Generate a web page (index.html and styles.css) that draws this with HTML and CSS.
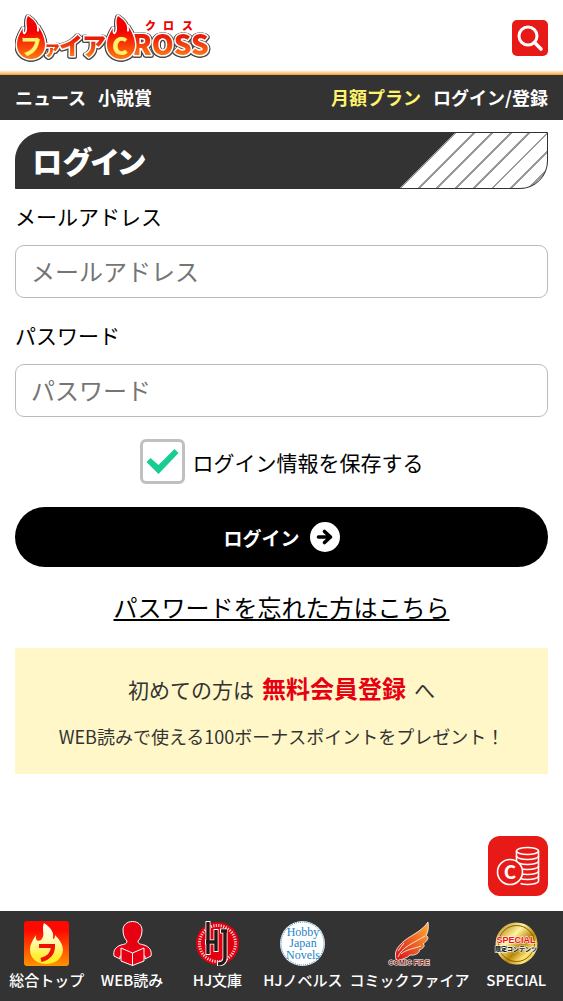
FILE: index.html
```
<!DOCTYPE html>
<html lang="ja">

<head>
    <meta charset="UTF-8">
    <meta name="viewport" content="width=device-width, initial-scale=1.0">
    <title>ログイン | ファイアCROSS</title>
    <link rel="stylesheet" href="styles.css">
</head>

<body>
    <header class="header">
        <a href="#" class="logo">
            <svg width="200" height="51" viewBox="0 0 200 51" role="img" aria-label="ファイアCROSS">
                <defs>
                    <linearGradient id="fire" x1="0" y1="0" x2="0" y2="1">
                        <stop offset="0.35" stop-color="#f40000"/>
                        <stop offset="1" stop-color="#ff7a10"/>
                    </linearGradient>
                    <linearGradient id="letter" x1="0" y1="0" x2="0" y2="1">
                        <stop offset="0.35" stop-color="#e81c08"/>
                        <stop offset="0.8" stop-color="#ff7414"/>
                    </linearGradient>
                    <path id="flame" d="M13 4C19 8 23 12 22 18C22 20 23 20 24 19C24 17 24 16 23 14C27 20 30 26 30 33C30 41 24 47 16 47C8 47 2 41 2 33C2 26 5 21 8 16C7 20 8 23 10 22C15 18 9 11 13 4Z"/>
                </defs>
                <g class="logo-body">
                    <g class="logo-letters">
                        <text x="28" y="43" font-size="18">ァ</text>
                        <text x="44" y="43" font-size="24">イ</text>
                        <text x="67" y="43" font-size="24">ア</text>
                        <text x="117" y="43" font-size="28">ROSS</text>
                    </g>
                    <use href="#flame"/>
                    <use href="#flame" x="90"/>
                </g>
                <text class="logo-mark" x="5" y="42" font-size="22">フ</text>
                <text class="logo-mark" x="97" y="43" font-size="24">C</text>
                <g class="logo-ruby">
                    <text x="130" y="18">ク</text>
                    <text x="148" y="18">ロ</text>
                    <text x="167" y="18">ス</text>
                </g>
            </svg>
        </a>
        <button type="button" class="search" aria-label="検索">
            <svg width="36" height="36" viewBox="0 0 36 36" fill="none" stroke="#fff">
                <circle cx="16" cy="16" r="9" stroke-width="3"/>
                <path d="M22.5 22.5L29 29" stroke-width="3.6" stroke-linecap="round"/>
            </svg>
        </button>
    </header>

    <nav class="nav">
        <a href="#">ニュース</a>
        <a href="#">小説賞</a>
        <a href="#" class="plan">月額プラン</a>
        <a href="#">ログイン/登録</a>
    </nav>

    <main class="main">
        <h1 class="title">ログイン</h1>
        <form class="form">
            <label for="mail" class="label">メールアドレス</label>
            <input type="email" id="mail" class="text" placeholder="メールアドレス">
            <label for="pass" class="label">パスワード</label>
            <input type="password" id="pass" class="text" placeholder="パスワード">
            <label class="save"><input type="checkbox" class="check" checked>ログイン情報を保存する</label>
            <button type="submit" class="submit">ログイン
                <svg width="30" height="30" viewBox="0 0 30 30">
                    <circle cx="15" cy="15" r="15" fill="#fff"/>
                    <path d="M8.5 15H20M14.5 9.5L20.5 15L14.5 20.5" fill="none" stroke="#000" stroke-width="3.6" stroke-linecap="round" stroke-linejoin="round"/>
                </svg>
            </button>
        </form>
        <a href="#" class="forgot">パスワードを忘れた方はこちら</a>
        <div class="entry">
            <p class="entry-lead">初めての方は<a href="#">無料会員登録</a>へ</p>
            <p class="entry-note">WEB読みで使える100ボーナスポイントをプレゼント！</p>
        </div>
    </main>

    <a href="#" class="coin" aria-label="コイン">
        <svg width="60" height="60" viewBox="0 0 60 60" fill="none" stroke="#fff" stroke-width="1.6">
            <ellipse cx="39.5" cy="15" rx="11" ry="3.5"/>
            <path d="M28.5 15V46M50.5 15V45c0 2-5 3.5-11 3.5-3 0-5-.3-7-1"/>
            <path d="M28.5 20c0 2 5 3.5 11 3.5s11-1.5 11-3.5M28.5 25c0 2 5 3.5 11 3.5s11-1.5 11-3.5M28.5 30c0 2 5 3.5 11 3.5s11-1.5 11-3.5M28.5 35c0 2 5 3.5 11 3.5s11-1.5 11-3.5M28.5 40c0 2 5 3.5 11 3.5s11-1.5 11-3.5"/>
            <circle cx="22" cy="36" r="12.5" fill="#e71a18"/>
            <text x="22" y="43" class="coin-c">C</text>
        </svg>
    </a>

    <nav class="bottom">
        <a href="#">
            <svg width="45" height="45" viewBox="0 0 45 45">
                <defs>
                    <linearGradient id="topBg" x1="0" y1="0" x2="0" y2="1">
                        <stop offset="0.2" stop-color="#ff0800"/>
                        <stop offset="1" stop-color="#ff9400"/>
                    </linearGradient>
                    <linearGradient id="topFire" x1="0" y1="0" x2="0" y2="1">
                        <stop offset="0" stop-color="#fff"/>
                        <stop offset="0.45" stop-color="#fff9b0"/>
                        <stop offset="0.85" stop-color="#ffee28"/>
                    </linearGradient>
                </defs>
                <rect width="45" height="45" rx="3" fill="url(#topBg)"/>
                <path d="M20 2C27 7 30 11 29 17C29 19 31 18 31 14C36 19 39 24 39 29C38 38 31 43 22 43C13 43 6 37 6 29C6 23 9 19 12 14C11 19 14 21 17 19C22 14 17 9 20 2Z" fill="url(#topFire)"/>
                <path d="M15 25H29C29 33 25 37 17 39" fill="none" stroke="#f01000" stroke-width="4"/>
            </svg>
            総合トップ
        </a>
        <a href="#">
            <svg width="45" height="45" viewBox="0 0 45 45" fill="#e60012" stroke="#fff" stroke-linejoin="round">
                <path d="M17 20C14 17 13 13 13 9C13 4 17 .5 22.5 .5S32 4 32 9C32 13 31 17 28 20C28 23 30 23 34 24C40 26 42 30 41 35L35 38V35H10V38L4 35C3 30 5 26 11 24C15 23 17 23 17 20Z"/>
                <path d="M22.5 32L11 27V40L22.5 44.5L34 40V27ZM22.5 32V44.5"/>
            </svg>
            WEB読み
        </a>
        <a href="#">
            <svg width="45" height="45" viewBox="0 0 45 45">
                <circle cx="22.5" cy="22.5" r="21.5" fill="#e00010"/>
                <circle cx="22.5" cy="22.5" r="18" fill="none" stroke="#fff" stroke-width="3" stroke-dasharray="1.2 1.3" opacity="0.8"/>
                <circle cx="22.5" cy="22.5" r="15.5" fill="#e00010"/>
                <g fill="none">
                    <path d="M13 0V34M10 21H22M21 8V31M25 10H32M30 9V37C30 41 27 43 22 43" stroke="#fff" stroke-width="5"/>
                    <path d="M13 1V33M11 21H22M21 9V30M26 10H32M30 9V37C30 41 27 43 23 43" stroke="#221818" stroke-width="3.4"/>
                </g>
            </svg>
            HJ文庫
        </a>
        <a href="#">
            <svg width="45" height="45" viewBox="0 0 45 45">
                <circle cx="22.5" cy="22.5" r="22.5" fill="#fff"/>
                <circle cx="22.5" cy="22.5" r="21.5" fill="none" stroke="#2684c4" stroke-dasharray="1 1"/>
                <g class="novels">
                    <text x="23" y="15">Hobby</text>
                    <text x="23" y="26">Japan</text>
                    <text x="23" y="38">Novels</text>
                </g>
            </svg>
            HJノベルス
        </a>
        <a href="#">
            <svg width="45" height="45" viewBox="0 0 45 45">
                <defs>
                    <linearGradient id="wing" x1="0" y1="1" x2="1" y2="0">
                        <stop offset="0.1" stop-color="#d81c18"/>
                        <stop offset="0.9" stop-color="#ffa030"/>
                    </linearGradient>
                </defs>
                <path d="M9 38C7 31 10 26 17 20C26 13 35 10 41 1C42 7 41 11 39 15C42 15 42 19 36 23C39 24 36 28 32 29C34 31 28 35 23 34C20 38 14 37 12 41Z" fill="url(#wing)" stroke="#fff" stroke-width=".8"/>
                <path d="M11 36C15 26 25 23 38 15M14 33C20 28 26 28 34 25M11 30L17 22" fill="none" stroke="#fff" stroke-width=".8"/>
                <text class="comic" x="22" y="44">COMIC FIRE</text>
            </svg>
            コミックファイア
        </a>
        <a href="#">
            <svg width="45" height="45" viewBox="0 0 45 45">
                <defs>
                    <linearGradient id="gold" x1="0" y1="0" x2="1" y2="1">
                        <stop offset="0" stop-color="#a87600"/>
                        <stop offset="0.35" stop-color="#fff4a0"/>
                        <stop offset="0.6" stop-color="#b88408"/>
                        <stop offset="0.8" stop-color="#ffe878"/>
                        <stop offset="1" stop-color="#946400"/>
                    </linearGradient>
                </defs>
                <circle cx="22.5" cy="22.5" r="21" fill="url(#gold)"/>
                <circle cx="22.5" cy="22.5" r="18" fill="url(#gold)" stroke="#8a6000"/>
                <g class="medal">
                    <text class="medal-en" x="22" y="22">SPECIAL</text>
                    <text x="22" y="30">限定コンテンツ</text>
                </g>
            </svg>
            SPECIAL
        </a>
    </nav>
</body>

</html>
```
FILE: styles.css
```
* {
    margin: 0;
    padding: 0;
    box-sizing: border-box;
}

body {
    font-family: "Noto Sans CJK JP", sans-serif;
    color: #000;
    background: #fff;
    padding-bottom: 102px;
}

a {
    color: inherit;
    text-decoration: none;
}

svg {
    display: block;
    flex: none;
}

button {
    border: none;
    font-family: inherit;
    cursor: pointer;
}

/* ヘッダー */
.header {
    display: flex;
    justify-content: space-between;
    align-items: center;
    height: 75px;
    padding: 0 15px;
    background: linear-gradient(#fff, #fac98a 3px, #f99b2c) no-repeat bottom / 100% 5px;
}

.logo-body {
    fill: url(#fire);
    stroke: #fff;
    stroke-width: 3px;
    stroke-linejoin: round;
    paint-order: stroke;
    filter: drop-shadow(1px 0 #444) drop-shadow(-1px 0 #444) drop-shadow(0 1px #444);
}

.logo-letters {
    fill: url(#letter);
    font-weight: 900;
}

.logo-mark {
    fill: #fff36c;
    font-weight: 900;
}

.logo-ruby {
    fill: #f00000;
    font-size: 11px;
    font-weight: 900;
}

.search {
    width: 36px;
    height: 36px;
    border-radius: 5px;
    background: #e71a18;
}

/* ナビ */
.nav {
    display: flex;
    align-items: center;
    gap: 12px;
    height: 45px;
    padding: 0 15px 2px;
    background: #333;
    color: #fff;
    font-size: 18px;
    font-weight: bold;
}

.nav .plan {
    margin-left: auto;
    color: #fff36c;
}

.main {
    padding: 12px 15px;
}

.title {
    height: 57px;
    padding-left: 16px;
    border: 1px solid #333;
    border-radius: 28px 0 28px 0;
    background: linear-gradient(135deg, #333 39px, transparent 39px) no-repeat right / 148px 100%,
        repeating-linear-gradient(135deg, #999 0, #999 2px, #fff 2px, #fff 13px) no-repeat right / 148px 100%,
        #333;
    color: #fff;
    font-size: 30px;
    font-weight: 900;
    font-feature-settings: "palt";
    line-height: 54px;
}

/* フォーム */
.form {
    display: flex;
    flex-direction: column;
}

.label {
    margin: 11px 0 13px;
    font-size: 21px;
    line-height: 32px;
}

.text {
    width: 100%;
    height: 53px;
    margin-bottom: 10px;
    padding: 0 15px 2px;
    border: 1px solid #bbb;
    border-radius: 9px;
    font-family: inherit;
    font-size: 24px;
}

.text::placeholder {
    color: #757575;
}

.save {
    display: flex;
    align-items: center;
    justify-content: center;
    gap: 8px;
    height: 45px;
    margin: 12px 0 23px;
    font-size: 21px;
    line-height: 30px;
}

.check {
    appearance: none;
    width: 45px;
    height: 45px;
    border: 3px solid #c0c0c0;
    border-radius: 6px;
}

.check:checked::before {
    content: "";
    display: block;
    height: 39px;
    background: #18cc94;
    clip-path: polygon(4px 20px, 8px 16px, 16px 23px, 32px 7px, 36px 11px, 16px 32px);
}

.submit {
    display: flex;
    align-items: center;
    justify-content: center;
    gap: 10px;
    height: 60px;
    border-radius: 30px;
    background: #000;
    color: #fff;
    font-size: 19px;
    font-weight: bold;
}

.forgot {
    display: block;
    margin: 22px 0 23px;
    font-size: 24px;
    line-height: 36px;
    text-align: center;
    text-decoration: underline;
}

.entry {
    padding: 23px 0 24px;
    background: #fff7c8;
    color: #333;
    text-align: center;
}

.entry-lead {
    margin-bottom: 16px;
    font-size: 21px;
    line-height: 36px;
}

.entry-lead a {
    margin: 0 8px;
    color: #e60012;
    font-size: 24px;
    font-weight: bold;
    line-height: 24px;
}

.entry-note {
    font-size: 18px;
    line-height: 27px;
}

/* 画面下に固定 */
.coin {
    position: fixed;
    right: 15px;
    bottom: 105px;
    border-radius: 12px;
    background: #e71a18;
}

.coin-c {
    fill: #fff;
    stroke: none;
    font-size: 19px;
    font-weight: bold;
    text-anchor: middle;
}

.bottom {
    position: fixed;
    left: 0;
    right: 0;
    bottom: 0;
    display: grid;
    grid-template-columns: repeat(4, 2fr) 3fr 2fr;
    height: 90px;
    padding: 10px 4px 0;
    background: #333;
    color: #fff;
    font-size: 15px;
    font-weight: 500;
    line-height: 28px;
    white-space: nowrap;
}

.bottom a {
    display: flex;
    flex-direction: column;
    align-items: center;
}

.novels {
    fill: #2684c4;
    font-family: "Liberation Serif", serif;
    font-size: 12px;
    font-weight: normal;
    text-anchor: middle;
}

.comic {
    fill: #7c1c14;
    stroke: #fff;
    stroke-width: 1px;
    paint-order: stroke;
    font-family: "Liberation Sans", sans-serif;
    font-size: 7px;
    font-weight: bold;
    text-anchor: middle;
}

.medal {
    fill: #222;
    stroke: #fff;
    stroke-width: 1px;
    paint-order: stroke;
    font-size: 6px;
    font-weight: 900;
    text-anchor: middle;
}

.medal-en {
    fill: #f01010;
    font-family: "Liberation Sans", sans-serif;
    font-size: 9px;
}
```
